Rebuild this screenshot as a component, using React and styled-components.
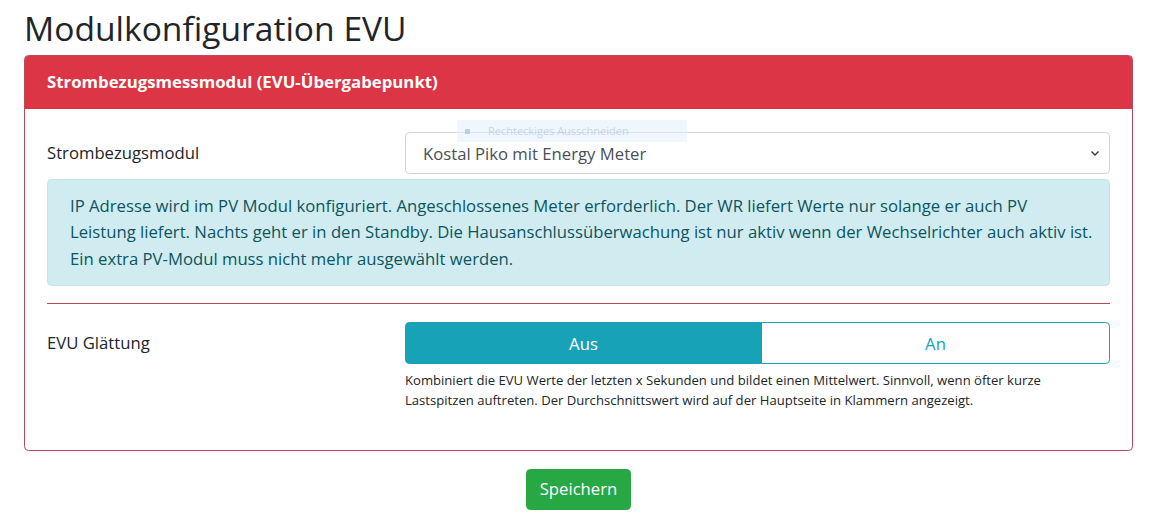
import React, { useState } from "react";
import styled, { createGlobalStyle } from "styled-components";

const Global = createGlobalStyle`
  * { box-sizing: border-box; }
  body {
    margin: 0;
    background: #fff;
    color: #212529;
    font-family: "Open Sans", "Noto Sans", sans-serif;
    font-size: 16.7px;
    line-height: 26.4px;
  }
`;

const Page = styled.div`
  padding: 8px 28px 8px 24px;
  position: relative;
`;

const Title = styled.h1`
  margin: 0 0 7px;
  font-size: 33.6px;
  font-weight: 400;
  line-height: 40px;
  color: #212529;
`;

const Card = styled.section`
  border: 1px solid #b9495c;
  border-radius: 4.4px;
  overflow: hidden;
`;

const CardHeader = styled.header`
  background: #dc3545;
  color: #fff;
  font-weight: 700;
  font-size: 16.8px;
  line-height: 26.4px;
  padding: 13px 22px 13.6px;
`;

const CardBody = styled.div`
  padding: 23px 22px 22px;
`;

const FormRow = styled.div`
  display: grid;
  grid-template-columns: 358px 1fr;
  align-items: ${(p) => (p.$top ? "start" : "center")};
  margin-bottom: ${(p) => p.$mb || "0"};
`;

const Label = styled.label`
  display: block;
  padding-top: ${(p) => (p.$top ? "8px" : "0")};
`;

const SelectWrap = styled.div`
  position: relative;
`;

const Select = styled.select`
  width: 100%;
  height: 42px;
  appearance: none;
  -webkit-appearance: none;
  border: 1px solid #ced4da;
  border-radius: 4.4px;
  background: #fff;
  color: #495057;
  font-family: inherit;
  font-size: 16.7px;
  padding: 0 30px 0 17px;
  outline: none;
`;

const Chevron = styled.svg`
  position: absolute;
  right: 10px;
  top: 50%;
  width: 10px;
  height: 10px;
  transform: translateY(-50%);
  pointer-events: none;
`;

const Alert = styled.div`
  margin-top: 5px;
  background: #d1ecf1;
  border: 1px solid #bee5eb;
  border-radius: 4.4px;
  color: #0c5460;
  padding: 13px 10px 13px 22px;
  line-height: 26.4px;
`;

const Divider = styled.hr`
  border: 0;
  border-top: 1px solid #b9495c;
  margin: 17px 0 18px;
`;

const Toggle = styled.div`
  display: flex;
  width: 100%;
`;

const ToggleButton = styled.button`
  flex: 1 1 auto;
  height: 42px;
  font-family: inherit;
  font-size: 16.7px;
  border: 1px solid #17a2b8;
  background: ${(p) => (p.$active ? "#17a2b8" : "#fff")};
  color: ${(p) => (p.$active ? "#fff" : "#17a2b8")};
  padding: 0 13px;
  cursor: pointer;
  &:first-child {
    border-radius: 4.4px 0 0 4.4px;
  }
  &:last-child {
    border-radius: 0 4.4px 4.4px 0;
    margin-left: -1px;
  }
`;

const Help = styled.small`
  display: block;
  margin-top: 6px;
  font-size: 13.1px;
  line-height: 20px;
  color: #212529;
`;

const Footer = styled.div`
  display: flex;
  justify-content: center;
  padding-top: 18px;
`;

const SaveButton = styled.button`
  background: #28a745;
  border: 1px solid #28a745;
  color: #fff;
  font-family: inherit;
  font-size: 16.7px;
  line-height: 26.4px;
  padding: 6px 13px;
  border-radius: 4.4px;
  cursor: pointer;
`;

const SnipHint = styled.div`
  position: absolute;
  left: 457px;
  top: 120px;
  width: 230px;
  height: 22px;
  background: rgba(225, 238, 252, 0.55);
  display: flex;
  align-items: center;
  gap: 18px;
  padding-left: 8px;
  font-size: 11px;
  color: rgba(170, 190, 215, 0.6);
  pointer-events: none;
`;

const SnipDot = styled.span`
  width: 5px;
  height: 5px;
  background: rgba(170, 190, 215, 0.7);
`;

export default function App() {
  const [on, setOn] = useState(false);
  return (
    <>
      <Global />
      <Page>
        <Title>Modulkonfiguration EVU</Title>
        <Card>
          <CardHeader>Strombezugsmessmodul (EVU-Übergabepunkt)</CardHeader>
          <CardBody>
            <FormRow>
              <Label>Strombezugsmodul</Label>
              <SelectWrap>
                <Select defaultValue="kostal">
                  <option value="kostal">Kostal Piko mit Energy Meter</option>
                </Select>
                <Chevron viewBox="0 0 10 10">
                  <path d="M1.5 3.5 L5 7 L8.5 3.5" fill="none" stroke="#343a40" strokeWidth="1.4" />
                </Chevron>
              </SelectWrap>
            </FormRow>
            <Alert>
              IP Adresse wird im PV Modul konfiguriert. Angeschlossenes Meter erforderlich. Der WR liefert Werte nur solange er auch PV
              <br />
              Leistung liefert. Nachts geht er in den Standby. Die Hausanschlussüberwachung ist nur aktiv wenn der Wechselrichter auch aktiv ist.
              <br />
              Ein extra PV-Modul muss nicht mehr ausgewählt werden.
            </Alert>
            <Divider />
            <FormRow $top $mb="18px">
              <Label $top>EVU Glättung</Label>
              <div>
                <Toggle>
                  <ToggleButton $active={!on} onClick={() => setOn(false)}>Aus</ToggleButton>
                  <ToggleButton $active={on} onClick={() => setOn(true)}>An</ToggleButton>
                </Toggle>
                <Help>
                  Kombiniert die EVU Werte der letzten x Sekunden und bildet einen Mittelwert. Sinnvoll, wenn öfter kurze Lastspitzen auftreten. Der Durchschnittswert wird auf der Hauptseite in Klammern angezeigt.
                </Help>
              </div>
            </FormRow>
          </CardBody>
        </Card>
        <Footer>
          <SaveButton>Speichern</SaveButton>
        </Footer>
        <SnipHint>
          <SnipDot />
          Rechteckiges Ausschneiden
        </SnipHint>
      </Page>
    </>
  );
}
